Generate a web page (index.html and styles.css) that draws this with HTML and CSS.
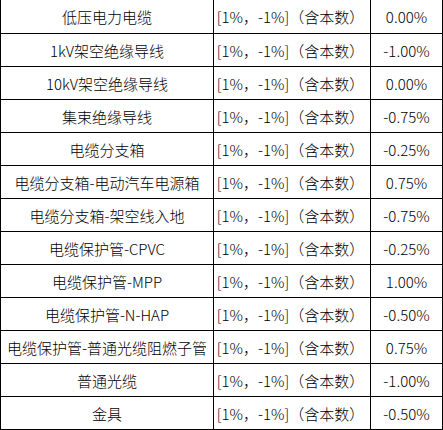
FILE: index.html
```html
<!DOCTYPE html>
<html lang="zh-CN">
<head>
<meta charset="utf-8">
<title>表格</title>
<link rel="stylesheet" href="styles.css">
</head>
<body>
<div class="table">
  <div class="row"><div class="cell name">低压电力电缆</div><div class="cell range">[1%，-1%]（含本数）</div><div class="cell val">0.00%</div></div>
  <div class="row"><div class="cell name">1kV架空绝缘导线</div><div class="cell range">[1%，-1%]（含本数）</div><div class="cell val">-1.00%</div></div>
  <div class="row"><div class="cell name">10kV架空绝缘导线</div><div class="cell range">[1%，-1%]（含本数）</div><div class="cell val">0.00%</div></div>
  <div class="row"><div class="cell name">集束绝缘导线</div><div class="cell range">[1%，-1%]（含本数）</div><div class="cell val">-0.75%</div></div>
  <div class="row"><div class="cell name">电缆分支箱</div><div class="cell range">[1%，-1%]（含本数）</div><div class="cell val">-0.25%</div></div>
  <div class="row"><div class="cell name">电缆分支箱-电动汽车电源箱</div><div class="cell range">[1%，-1%]（含本数）</div><div class="cell val">0.75%</div></div>
  <div class="row"><div class="cell name">电缆分支箱-架空线入地</div><div class="cell range">[1%，-1%]（含本数）</div><div class="cell val">-0.75%</div></div>
  <div class="row"><div class="cell name">电缆保护管-CPVC</div><div class="cell range">[1%，-1%]（含本数）</div><div class="cell val">-0.25%</div></div>
  <div class="row"><div class="cell name">电缆保护管-MPP</div><div class="cell range">[1%，-1%]（含本数）</div><div class="cell val">1.00%</div></div>
  <div class="row"><div class="cell name">电缆保护管-N-HAP</div><div class="cell range">[1%，-1%]（含本数）</div><div class="cell val">-0.50%</div></div>
  <div class="row"><div class="cell name">电缆保护管-普通光缆阻燃子管</div><div class="cell range">[1%，-1%]（含本数）</div><div class="cell val">0.75%</div></div>
  <div class="row"><div class="cell name">普通光缆</div><div class="cell range">[1%，-1%]（含本数）</div><div class="cell val">-1.00%</div></div>
  <div class="row"><div class="cell name">金具</div><div class="cell range">[1%，-1%]（含本数）</div><div class="cell val">-0.50%</div></div>
</div>
</body>
</html>
```
FILE: styles.css
```css
html, body {
  margin: 0;
  padding: 0;
  background: #ffffff;
}
.table {
  width: 443px;
  display: flex;
  flex-direction: column;
  font-family: "Noto Sans CJK SC", "Noto Sans", sans-serif;
  font-size: 15px;
  font-weight: 300;
  color: #000000;
  border-left: 1px solid #000;
  box-sizing: border-box;
}
.row {
  display: grid;
  grid-template-columns: 213px 157px 72px;
  height: 33px;
}
.row:first-child {
  height: 34px;
}
.cell {
  display: flex;
  align-items: center;
  justify-content: center;
  border-right: 1px solid #000;
  border-bottom: 1px solid #000;
  white-space: nowrap;
  line-height: 1;
  box-sizing: border-box;
}
.range {
  padding-right: 3px;
}
```
